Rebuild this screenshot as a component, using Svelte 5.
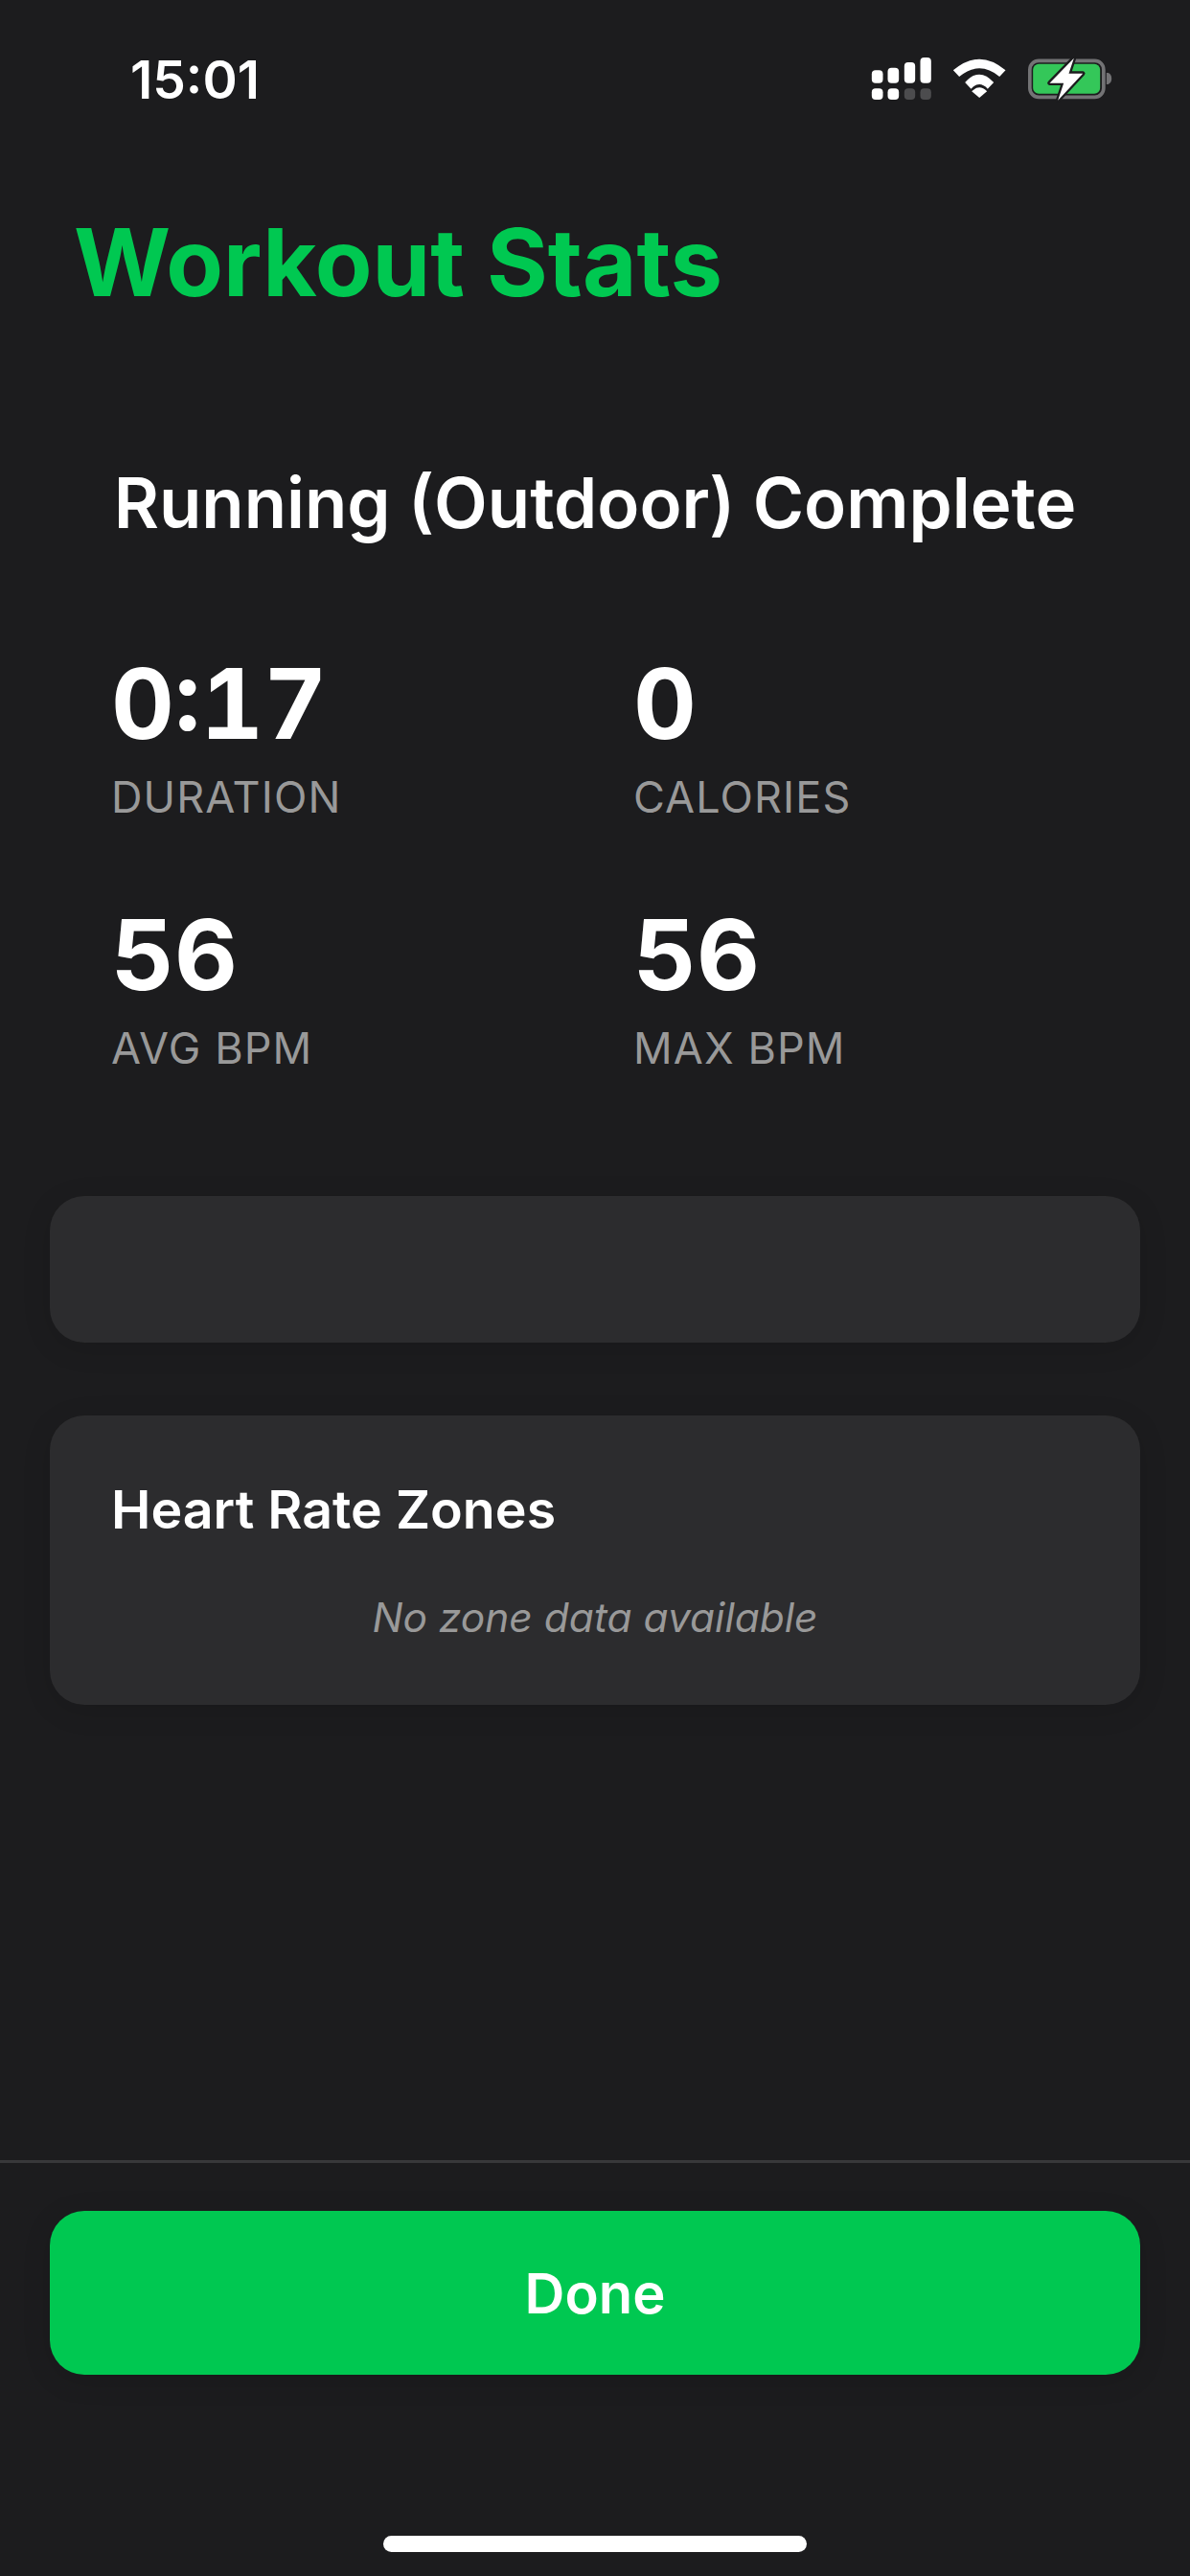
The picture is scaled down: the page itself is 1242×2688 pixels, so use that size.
<script lang="ts">
  const stats = [
    { value: "0:17", label: "DURATION" },
    { value: "0", label: "CALORIES" },
    { value: "56", label: "AVG BPM" },
    { value: "56", label: "MAX BPM" },
  ];
</script>

<div class="screen">
  <header class="status">
    <span class="time">15:01</span>
    <svg class="status-icons" viewBox="0 0 800 270" width="267" height="90" aria-hidden="true">
      <!-- dual sim signal -->
      <g fill="#fff">
        <rect x="5" y="130" width="35" height="40" rx="12" />
        <rect x="55" y="122" width="35" height="48" rx="12" />
        <rect x="107" y="105" width="34" height="65" rx="12" />
        <rect x="157" y="90" width="34" height="80" rx="12" />
        <rect x="5" y="187" width="35" height="35" rx="12" />
        <rect x="55" y="187" width="35" height="35" rx="12" />
      </g>
      <g fill="#4c4c4e">
        <rect x="107" y="187" width="34" height="35" rx="12" />
        <rect x="157" y="187" width="34" height="35" rx="12" />
      </g>
      <!-- wifi -->
      <g fill="#fff">
        <path d="M260 130 Q342 60 424 130 L405 150 Q342 98 279 150Z" />
        <path d="M297 168 Q342 118 387 168 L368 188 Q342 160 316 188Z" />
        <path d="M342 216 L318 196 Q342 172 366 196Z" />
      </g>
      <!-- battery -->
      <rect x="500" y="100" width="231" height="114" rx="28" fill="none" stroke="#737375" stroke-width="11" />
      <rect x="510" y="110" width="210" height="93" rx="18" fill="#34c759" />
      <path d="M740 138 H745 Q756 142 756 156 Q756 170 745 174 H740Z" fill="#737375" />
      <path d="M638 92 L562 170 H606 L588 224 L666 140 H622Z" fill="#fff" stroke="#1c1c1e" stroke-width="14" stroke-linejoin="round" paint-order="stroke" />
    </svg>
  </header>

  <main class="content">
    <h1 class="title">Workout Stats</h1>
    <h2 class="subtitle">Running (Outdoor) Complete</h2>

    <div class="stats">
      {#each stats as s}
        <div class="stat">
          <div class="value">{s.value}</div>
          <div class="label">{s.label}</div>
        </div>
      {/each}
    </div>

    <section class="card empty"></section>

    <section class="card zones">
      <h3>Heart Rate Zones</h3>
      <p>No zone data available</p>
    </section>
  </main>

  <footer class="footer">
    <button class="done">Done</button>
    <div class="home-wrap"><div class="home"></div></div>
  </footer>
</div>

<style>
  :global(body) {
    margin: 0;
    background: #1c1c1e;
  }
  .screen {
    width: 1242px;
    height: 2688px;
    display: flex;
    flex-direction: column;
    background: #1c1c1e;
    color: #fff;
    font-family: Inter, "Liberation Sans", sans-serif;
    overflow: hidden;
  }
  .status {
    height: 132px;
    display: flex;
    align-items: flex-start;
    justify-content: space-between;
    padding: 30px 0 0 136px;
    box-sizing: border-box;
  }
  .time {
    font-size: 55px;
    font-weight: 600;
    line-height: 54px;
    margin-top: 26px;
  }
  .status-icons {
    margin-right: 67px;
    margin-left: auto;
  }
  .content {
    flex: 1;
    padding: 0 52px;
  }
  .title {
    margin: 80px 0 0;
    padding-left: 25px;
    font-size: 97.5px;
    font-weight: 700;
    line-height: 124px;
    color: #00c851;
  }
  .subtitle {
    margin: 145px 0 0;
    text-align: center;
    font-size: 72.5px;
    font-weight: 600;
    line-height: 88px;
  }
  .stats {
    display: grid;
    grid-template-columns: 545px 1fr;
    row-gap: 88px;
    margin-top: 114px;
    padding-left: 64px;
  }
  .value {
    font-size: 102px;
    font-weight: 700;
    line-height: 102px;
    font-variant-numeric: tabular-nums;
  }
  .label {
    margin-top: 22px;
    font-size: 45px;
    line-height: 50px;
    letter-spacing: 1.1px;
    color: #999;
  }
  .card {
    background: #2c2c2e;
    border-radius: 36px;
    box-shadow: 0 6px 30px rgba(0, 0, 0, 0.12);
  }
  .empty {
    height: 153px;
    margin-top: 129px;
  }
  .zones {
    height: 302px;
    box-sizing: border-box;
    margin-top: 76px;
    padding: 66px 64px 0;
  }
  .zones h3 {
    margin: 0;
    font-size: 55.5px;
    font-weight: 600;
    line-height: 64px;
  }
  .zones p {
    margin: 56px 0 0;
    text-align: center;
    font-size: 42.5px;
    font-style: italic;
    line-height: 50px;
    color: #999;
  }
  .footer {
    height: 434px;
    box-sizing: border-box;
    border-top: 3px solid #38383a;
    padding: 50px 52px 0;
  }
  .done {
    display: block;
    width: 100%;
    height: 171px;
    border: 0;
    border-radius: 36px;
    background: #00c851;
    color: #fff;
    font-family: inherit;
    font-size: 58px;
    font-weight: 600;
    box-shadow: 0 6px 30px rgba(0, 0, 0, 0.12);
  }
  .home-wrap {
    display: flex;
    justify-content: center;
    margin-top: 168px;
  }
  .home {
    width: 442px;
    height: 17px;
    border-radius: 9px;
    background: #fff;
  }
</style>
